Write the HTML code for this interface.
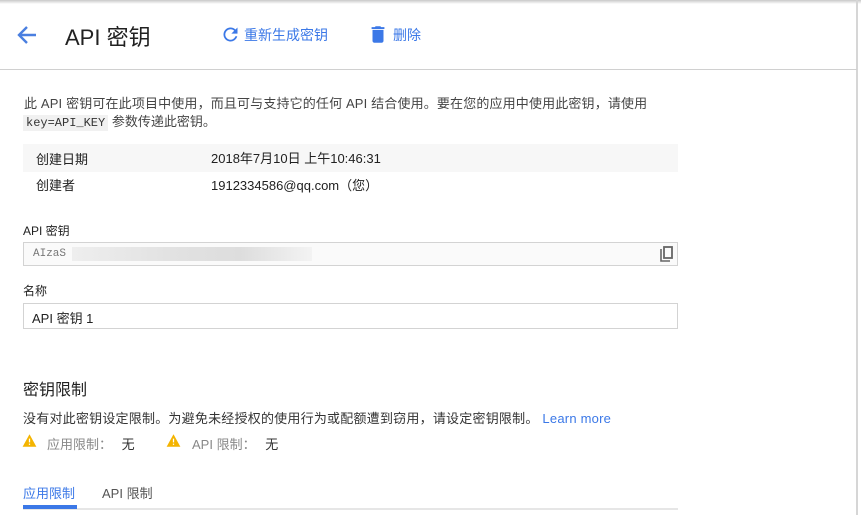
<!DOCTYPE html>
<html><head><meta charset="utf-8"><style>
*{margin:0;padding:0;box-sizing:border-box}
body{width:861px;height:515px;overflow:hidden;background:#fff;font-family:"Liberation Sans","Noto Sans CJK SC",sans-serif;color:#212121;position:relative}
.top{position:absolute;left:0;top:0;width:861px;height:4px;background:linear-gradient(#c8c8c8,#fff)}
.rb{position:absolute;left:856px;top:0;width:2px;height:515px;background:#d6d6d6}
.hdr{position:absolute;left:0;top:69px;width:857px;height:1px;background:#d0d0d0}
.abs{position:absolute;white-space:nowrap}
.blue{color:#3b78e7}
.row{position:absolute;left:23px;width:655px;height:28px;font-size:13px}
.inp{position:absolute;left:23px;width:655px;border:1px solid #d3d3d3}
</style></head><body>
<div class="top"></div><div class="rb"></div><div class="hdr"></div>
<svg class="abs" style="left:16px;top:25px" width="22" height="20" viewBox="0 0 22 20"><path d="M20 10H4M11 2L3 10l8 8" stroke="#4a7fe0" stroke-width="2.4" fill="none"/></svg>
<div class="abs" style="left:65px;top:20px;font-size:22px;color:#212121">API 密钥</div>
<svg class="abs" style="left:220px;top:24px" width="21" height="21" viewBox="0 0 24 24"><path fill="#3b78e7" d="M17.65 6.35A7.96 7.96 0 0 0 12 4a8 8 0 1 0 7.73 10h-2.08A6 6 0 1 1 12 6c1.66 0 3.14.69 4.22 1.78L13 11h7V4l-2.35 2.35z"/></svg>
<div class="abs blue" style="left:244px;top:25px;font-size:14px">重新生成密钥</div>
<svg class="abs" style="left:367px;top:23px" width="22" height="23" viewBox="0 0 24 24"><path fill="#3b78e7" d="M6 19c0 1.1.9 2 2 2h8c1.1 0 2-.9 2-2V7H6v12zM19 4h-3.5l-1-1h-5l-1 1H5v2h14V4z"/></svg>
<div class="abs blue" style="left:393px;top:25px;font-size:14px">删除</div>
<div class="abs" style="left:24px;top:93px;font-size:13px;color:#444;letter-spacing:0.15px">此 API 密钥可在此项目中使用，而且可与支持它的任何 API 结合使用。要在您的应用中使用此密钥，请使用</div>
<div class="abs" style="left:23px;top:111px;font-size:13px;color:#444"><span style="background:#f1f1f1;font-family:'Liberation Mono',monospace;font-size:12px;padding:1px 3px;color:#333">key=API_KEY</span> 参数传递此密钥。</div>
<div class="row" style="top:144px;background:#f7f7f7"><span class="abs" style="left:13px;top:5px">创建日期</span><span class="abs" style="left:188px;top:4px">2018年7月10日 上午10:46:31</span></div>
<div class="row" style="top:172px"><span class="abs" style="left:13px;top:3px">创建者</span><span class="abs" style="left:188px;top:3px">1912334586@qq.com（您）</span></div>
<div class="abs" style="left:23px;top:222px;font-size:12px">API 密钥</div>
<div class="inp" style="top:242px;height:24px;background:#fafafa"><span class="abs" style="left:9px;top:5px;font-family:'Liberation Mono',monospace;font-size:11px;color:#777">AIzaS</span><div class="abs" style="left:48px;top:4px;width:240px;height:14px;background:linear-gradient(90deg,#eee,#e2e2e2 40%,#ddd 70%,#f3f3f3)"></div>
<svg class="abs" style="left:636px;top:3px" width="14" height="16" viewBox="0 0 14 16"><path d="M1 3v12h9" stroke="#666" stroke-width="1.6" fill="none"/><rect x="4" y="1" width="8" height="11" stroke="#666" stroke-width="1.8" fill="none"/></svg></div>
<div class="abs" style="left:23px;top:282px;font-size:12px">名称</div>
<div class="inp" style="top:303px;height:26px"><span class="abs" style="left:8px;top:4px;font-size:13px">API 密钥 1</span></div>
<div class="abs" style="left:23px;top:376px;font-size:16px">密钥限制</div>
<div class="abs" style="left:23px;top:408px;font-size:13px;color:#333;letter-spacing:0.22px">没有对此密钥设定限制。为避免未经授权的使用行为或配额遭到窃用，请设定密钥限制。 <span class="blue">Learn more</span></div>
<svg class="abs" style="left:22px;top:433px" width="15" height="15" viewBox="0 0 24 24"><path fill="#f4b400" d="M1 22h22L12 2z"/><path fill="#fff" d="M11 9h2v6h-2zM11 17h2v2h-2z"/></svg>
<div class="abs" style="left:47px;top:434px;font-size:13px;color:#888">应用限制： <span style="color:#333;margin-left:6px">无</span></div>
<svg class="abs" style="left:166px;top:433px" width="15" height="15" viewBox="0 0 24 24"><path fill="#f4b400" d="M1 22h22L12 2z"/><path fill="#fff" d="M11 9h2v6h-2zM11 17h2v2h-2z"/></svg>
<div class="abs" style="left:192px;top:434px;font-size:13px;color:#888">API 限制： <span style="color:#333;margin-left:6px">无</span></div>
<div class="abs blue" style="left:23px;top:483px;font-size:13px">应用限制</div>
<div class="abs" style="left:102px;top:483px;font-size:13px;color:#555">API 限制</div>
<div class="abs" style="left:23px;top:508px;width:655px;height:2px;background:#e6e6e6"></div>
<div class="abs" style="left:23px;top:505px;width:54px;height:4px;background:#3b78e7"></div>
</body></html>
